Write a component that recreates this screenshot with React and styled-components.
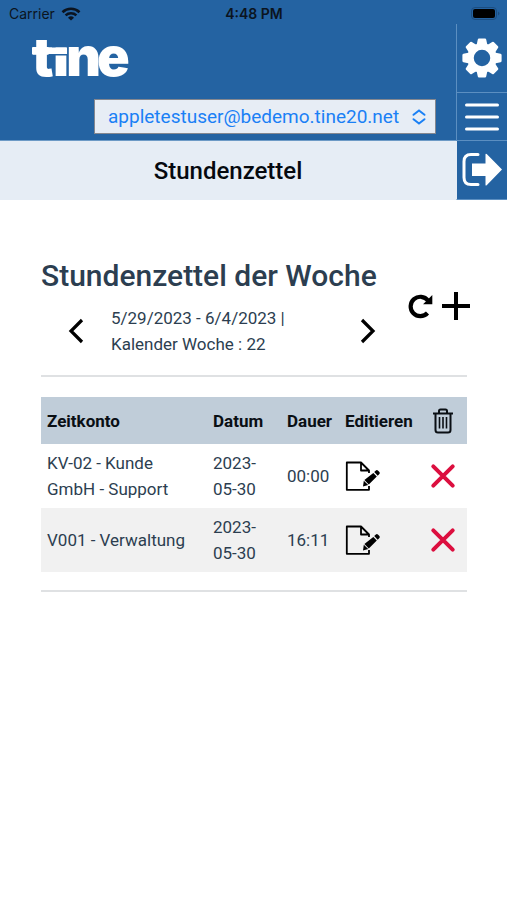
import React, { useState } from "react";
import styled, { createGlobalStyle } from "styled-components";

const GlobalStyle = createGlobalStyle`
  * {
    box-sizing: border-box;
  }
  body {
    margin: 0;
    background: #fff;
    color: #2c3e50;
    font-family: Roboto, "Liberation Sans", sans-serif;
    font-size: 17px;
    line-height: 26px;
  }
  svg {
    display: block;
    overflow: visible;
  }
`;

const StatusBar = styled.div`
  display: grid;
  grid-template-columns: 1fr auto 1fr;
  align-items: center;
  height: 24px;
  padding: 4px 8px 0 9px;
  background: #2463a2;
  color: #0b1420;
  font-family: Inter, "Liberation Sans", sans-serif;
  font-size: 14px;
  line-height: 20px;
`;

const Carrier = styled.div`
  display: flex;
  align-items: center;
  gap: 6px;
`;

const Clock = styled.div`
  font-weight: 600;
`;

const Battery = styled.div`
  justify-self: end;
`;

const Header = styled.header`
  display: flex;
  background: #2463a2;
`;

const HeaderMain = styled.div`
  flex: 1;
  min-width: 0;
`;

const Brand = styled.div`
  height: 116px;
  padding: 12px 20px 6px 30px;
  display: flex;
  flex-direction: column;
  justify-content: space-between;
`;

const AccountField = styled.label`
  display: grid;
  align-items: center;
  align-self: flex-end;
  width: 342px;
  max-width: 100%;
  > * {
    grid-area: 1 / 1;
  }
  svg {
    justify-self: end;
    margin-right: 10px;
    pointer-events: none;
  }
`;

const AccountSelect = styled.select`
  appearance: none;
  width: 100%;
  height: 35px;
  margin: 0;
  padding: 0 24px 0 13px;
  border: 1px solid #84878f;
  border-radius: 0;
  background: #e7edf5;
  color: #1a80f5;
  font-family: inherit;
  font-size: 19px;
`;

const PageTitle = styled.h1`
  height: 60px;
  margin: 0;
  border-top: 1px solid #6d9ac6;
  background: #e6edf5;
  color: #05090f;
  font-size: 24px;
  font-weight: 500;
  line-height: 60px;
  text-align: center;
`;

const SideNav = styled.nav`
  flex: none;
  width: 51px;
  display: flex;
  flex-direction: column;
`;

const SideButton = styled.button`
  display: flex;
  align-items: center;
  justify-content: center;
  height: ${(props) => props.$height}px;
  padding: 0;
  border: 0;
  border-left: 1px solid ${(props) => (props.$last ? "#e6edf5" : "#5c8fc1")};
  border-bottom: 1px solid #5c8fc1;
  background: none;
  color: #fff;
  cursor: pointer;
`;

const Content = styled.main`
  padding: 55px 40px 40px 41px;
`;

const WeekHeader = styled.div`
  display: flex;
  align-items: center;
`;

const WeekInfo = styled.div`
  flex: 1;
  min-width: 0;
`;

const WeekTitle = styled.h2`
  margin: 0 0 8px;
  font-size: 30px;
  font-weight: 500;
  line-height: 42px;
  white-space: nowrap;
`;

const WeekPicker = styled.div`
  display: grid;
  grid-template-columns: 70px 1fr 80px;
  align-items: center;
`;

const IconButton = styled.button`
  display: flex;
  align-items: center;
  justify-content: center;
  justify-self: ${(props) => props.$align || "center"};
  padding: 0;
  border: 0;
  background: none;
  color: #000;
  cursor: pointer;
`;

const Actions = styled.div`
  display: flex;
  align-items: center;
  gap: 8px;
  margin-right: -4px;
`;

const Divider = styled.hr`
  height: 2px;
  margin: 18px 0 20px;
  border: 0;
  background: #dfe1e3;
`;

const SheetTable = styled.table`
  width: 100%;
  border-collapse: collapse;
  table-layout: fixed;
`;

const Col = styled.col`
  width: ${(props) => (props.$width ? `${props.$width}px` : "auto")};
`;

const HeadCell = styled.th`
  height: 47px;
  padding: 0 6px;
  background: #c0cdd9;
  color: #0a0f14;
  font-weight: 700;
  text-align: left;
`;

const Row = styled.tr`
  &:nth-child(even) {
    background: #f1f1f1;
  }
`;

const Cell = styled.td`
  padding: 6px;
`;

const Centered = styled.div`
  display: flex;
  justify-content: center;
`;

// the bar of the "t" runs on over the dotless "i"
const Logo = () => (
  <svg width="104" height="44" viewBox="0 0 104 44" role="img" aria-label="tine">
    <text
      x="2 23 36 67"
      y="40"
      fill="#fff"
      fontFamily="Inter, sans-serif"
      fontWeight="900"
      fontSize="54"
    >
      tıne
    </text>
    <path d="M18.500 6h19v5.500h-19z" fill="#2463a2" />
    <path d="M2 11.500h35.500V18H2z" fill="#fff" />
    <path d="M18.500 18.800h19M37.800 11v30" fill="none" stroke="#2463a2" strokeWidth="1.400" />
  </svg>
);

const WifiIcon = () => (
  <svg width="20" height="14" viewBox="0 0 20 14" fill="none" stroke="currentColor" strokeWidth="2.600">
    <path d="M1.500 5.200a12.300 12.300 0 0 1 17 0M4.600 8.400a7.900 7.900 0 0 1 10.800 0" />
    <path d="M10 13.500 7 10.700a4.300 4.300 0 0 1 6 0z" fill="currentColor" stroke="none" />
  </svg>
);

const BatteryIcon = () => (
  <svg width="28" height="14" viewBox="0 0 28 14">
    <rect x="0.500" y="0.500" width="25" height="12" rx="3.500" fill="none" stroke="#1c4d80" />
    <rect x="2" y="2" width="22" height="9" rx="2" fill="#000" />
    <path d="M27 4.500v4c2-1 2-3 0-4z" fill="#1c4d80" />
  </svg>
);

const GearIcon = () => (
  <svg width="40" height="40" viewBox="-20 -20 40 40">
    <circle r="11.500" fill="none" stroke="currentColor" strokeWidth="6.500" />
    {[0, 45, 90, 135, 180, 225, 270, 315].map((angle) => (
      <path
        key={angle}
        d="M-5.500-12.500-4.200-18.600q.2-1 1.200-1h6q1 0 1.200 1L5.500-12.500z"
        fill="currentColor"
        transform={`rotate(${angle})`}
      />
    ))}
  </svg>
);

const MenuIcon = () => (
  <svg width="34" height="30" viewBox="0 0 34 30" stroke="currentColor" strokeWidth="3" strokeLinecap="round">
    <path d="M1.500 3h31M1.500 15h31M1.500 27h31" />
  </svg>
);

const LogoutIcon = () => (
  <svg width="40" height="36" viewBox="0 0 40 36">
    <path
      d="M16 2.500H9Q2 2.500 2 9.500v16q0 7 7 7h7"
      fill="none"
      stroke="currentColor"
      strokeWidth="3"
      strokeLinecap="round"
    />
    <path d="M10 11.500h13.500V2.600q0-1.500 1.200-.5L40 17.500 24.700 33.200q-1.200 1-1.200-.5v-8.600H10z" fill="currentColor" />
  </svg>
);

const UpDownIcon = () => (
  <svg width="14" height="16" viewBox="0 0 14 16" fill="none" stroke="#1a80f5" strokeWidth="2" strokeLinecap="round">
    <path d="M1.500 5.800 7 1.500l5.500 4.300M1.500 10.200 7 14.500l5.500-4.300" />
  </svg>
);

const ChevronIcon = ({ d }) => (
  <svg width="16" height="26" viewBox="0 0 16 26" fill="none" stroke="currentColor" strokeWidth="3.200">
    <path d={d} />
  </svg>
);

const ReloadIcon = () => (
  <svg width="25" height="26" viewBox="0 0 25 26">
    <path
      d="M19.500 20A9.700 9.700 0 1 1 20 7.500"
      fill="none"
      stroke="currentColor"
      strokeWidth="4.200"
    />
    <path d="M24.300 2v9.200h-9.200z" fill="currentColor" />
  </svg>
);

const PlusIcon = () => (
  <svg width="30" height="30" viewBox="0 0 30 30" stroke="currentColor" strokeWidth="4">
    <path d="M15 1v28M1 15h28" />
  </svg>
);

const TrashIcon = () => (
  <svg width="22" height="26" viewBox="0 0 22 26" fill="none" stroke="currentColor" strokeWidth="2">
    <path d="M1 5.500h20M7 5V3q0-1.500 1.500-1.500h5Q15 1.500 15 3v2M3.500 5.500v16.500q0 2.500 2.500 2.500h10q2.500 0 2.500-2.500V5.500" />
    <path d="M7.500 9v11.500M11 9v11.500M14.500 9v11.500" strokeWidth="1.600" />
  </svg>
);

const EditIcon = () => (
  <svg width="36" height="30" viewBox="0 0 36 30">
    <path
      d="M24 25v3.800H1.800V1.500H16l8 8V12M16 1.500v8h8"
      fill="none"
      stroke="currentColor"
      strokeWidth="1.800"
      strokeLinejoin="round"
    />
    <path
      d="m29.200 11 1.700-1.600q1-.9 2 .1l1.500 1.600q.9 1 0 1.900L32.700 14.700zM28.300 11.900l3.500 3.700-8 7.900-4.400-4.500zM18.800 19.700l4.400 4.400-5.200 1.500z"
      fill="currentColor"
    />
  </svg>
);

const CrossIcon = () => (
  <svg width="24" height="24" viewBox="0 0 24 24" stroke="#dc0f3f" strokeWidth="4" strokeLinecap="round">
    <path d="m2.300 2.300 19.400 19.400M21.700 2.300 2.300 21.700" />
  </svg>
);

const accounts = ["appletestuser@bedemo.tine20.net"];

const initialSheets = [
  { id: 1, account: "KV-02 - Kunde GmbH - Support", date: "2023-05-30", duration: "00:00" },
  { id: 2, account: "V001 - Verwaltung", date: "2023-05-30", duration: "16:11" },
];

const App = () => {
  const [sheets, setSheets] = useState(initialSheets);

  const removeSheet = (id) => {
    setSheets(sheets.filter((sheet) => sheet.id !== id));
  };

  return (
    <>
      <GlobalStyle />
      <StatusBar>
        <Carrier>
          Carrier <WifiIcon />
        </Carrier>
        <Clock>4:48 PM</Clock>
        <Battery>
          <BatteryIcon />
        </Battery>
      </StatusBar>
      <Header>
        <HeaderMain>
          <Brand>
            <Logo />
            <AccountField>
              <AccountSelect aria-label="Benutzer">
                {accounts.map((name) => (
                  <option key={name}>{name}</option>
                ))}
              </AccountSelect>
              <UpDownIcon />
            </AccountField>
          </Brand>
          <PageTitle>Stundenzettel</PageTitle>
        </HeaderMain>
        <SideNav>
          <SideButton $height={69} aria-label="Einstellungen">
            <GearIcon />
          </SideButton>
          <SideButton $height={48} aria-label="Menü">
            <MenuIcon />
          </SideButton>
          <SideButton $height={59} $last aria-label="Abmelden">
            <LogoutIcon />
          </SideButton>
        </SideNav>
      </Header>
      <Content>
        <WeekHeader>
          <WeekInfo>
            <WeekTitle>Stundenzettel der Woche</WeekTitle>
            <WeekPicker>
              <IconButton aria-label="Vorherige Woche">
                <ChevronIcon d="M14 2 3 13l11 11" />
              </IconButton>
              <div>5/29/2023 - 6/4/2023 | Kalender Woche : 22</div>
              <IconButton aria-label="Nächste Woche">
                <ChevronIcon d="m2 2 11 11L2 24" />
              </IconButton>
            </WeekPicker>
          </WeekInfo>
          <Actions>
            <IconButton aria-label="Neu laden" onClick={() => setSheets(initialSheets)}>
              <ReloadIcon />
            </IconButton>
            <IconButton aria-label="Hinzufügen">
              <PlusIcon />
            </IconButton>
          </Actions>
        </WeekHeader>
        <Divider />
        <SheetTable>
          <colgroup>
            <Col />
            <Col $width={74} />
            <Col $width={58} />
            <Col $width={80} />
            <Col $width={48} />
          </colgroup>
          <thead>
            <tr>
              <HeadCell>Zeitkonto</HeadCell>
              <HeadCell>Datum</HeadCell>
              <HeadCell>Dauer</HeadCell>
              <HeadCell>Editieren</HeadCell>
              <HeadCell aria-label="Löschen">
                <Centered>
                  <TrashIcon />
                </Centered>
              </HeadCell>
            </tr>
          </thead>
          <tbody>
            {sheets.map((sheet) => (
              <Row key={sheet.id}>
                <Cell>{sheet.account}</Cell>
                <Cell>{sheet.date}</Cell>
                <Cell>{sheet.duration}</Cell>
                <Cell>
                  <IconButton $align="start" aria-label="Editieren">
                    <EditIcon />
                  </IconButton>
                </Cell>
                <Cell>
                  <Centered>
                    <IconButton aria-label="Löschen" onClick={() => removeSheet(sheet.id)}>
                      <CrossIcon />
                    </IconButton>
                  </Centered>
                </Cell>
              </Row>
            ))}
          </tbody>
        </SheetTable>
        <Divider />
      </Content>
    </>
  );
};

export default App;
